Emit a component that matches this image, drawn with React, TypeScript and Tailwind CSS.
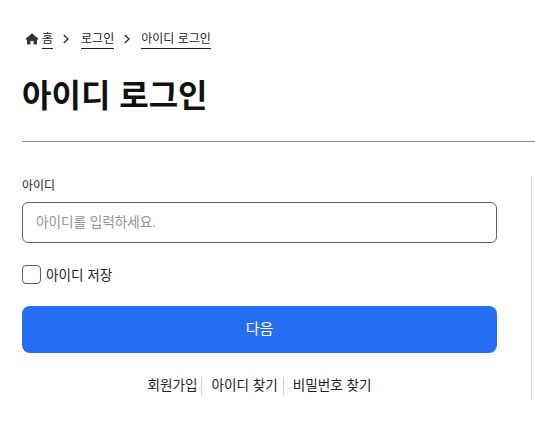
import React from "react";

function Chevron({ right }: { right: string }) {
  return (
    <svg width="8" height="10" viewBox="0 0 8 10" fill="none" className={right} stroke="#1e2124" strokeWidth="1.2">
      <path d="M1.8 1 L6 5 L1.8 9" />
    </svg>
  );
}

export default function App() {
  return (
    <div className="w-[535px] h-[425px] overflow-hidden bg-white text-[#1e2124] [font-family:'Liberation_Sans','Noto_Sans_CJK_KR',sans-serif]">
      <nav className="flex items-center h-[18px] mt-[30px] ml-[26px] text-[12px] leading-[17px]">
        <svg width="12" height="12" viewBox="0 0 12 12" className="mr-[4px] shrink-0" fill="#33363d">
          <path d="M6 .3 L12 5.6 V6.8 H11 V10.4 Q11 11.4 10 11.4 H7.6 V8 H4.4 V11.4 H2 Q1 11.4 1 10.4 V6.8 H0 V5.6 Z" />
        </svg>
        <span className="pt-px border-b border-[#1e2124]">홈</span>
        <Chevron right="ml-[9px] mr-[11px] shrink-0" />
        <span className="pt-px border-b border-[#1e2124]">로그인</span>
        <Chevron right="ml-[9px] mr-[10px] shrink-0" />
        <span className="pt-px border-b border-[#1e2124]">아이디 로그인</span>
      </nav>
      <h1 className="mt-[24px] ml-[22px] text-[32px] leading-[48px] font-bold text-[#111111]">아이디 로그인</h1>
      <div className="mt-[21px] ml-[22px] h-px bg-[#8a949e]" />
      <div className="mt-[34px] ml-[22px] w-[510px] pr-[34px] border-r border-[#cdd1d5] h-[223px]">
        <label className="block text-[12px] pt-px leading-[18px] h-[18px] text-[#1e2124]">아이디</label>
        <div className="mt-[8px] h-[41px] border border-[#58616a] rounded-[6px] px-[13px] pt-px flex items-center text-[13.6px] text-[#8a949e]">
          아이디를 입력하세요.
        </div>
        <label className="mt-[22px] flex items-center h-[19px]">
          <span className="w-[19px] h-[19px] border border-[#58616a] rounded-[4px] shrink-0" />
          <span className="ml-[5px] pt-px text-[13.6px] leading-[19px]">아이디 저장</span>
        </label>
        <button className="mt-[22px] w-full h-[47px] rounded-[8px] bg-[#256ef4] text-white text-[15px] flex items-center justify-center">
          다음
        </button>
        <div className="mt-[24px] flex items-center justify-center text-[13.6px] leading-[18px]">
          <span className="pr-[4px] border-r border-[#cdd1d5]">회원가입</span>
          <span className="pl-[9px] pr-[5px] border-r border-[#cdd1d5]">아이디 찾기</span>
          <span className="pl-[9px]">비밀번호 찾기</span>
        </div>
      </div>
    </div>
  );
}
